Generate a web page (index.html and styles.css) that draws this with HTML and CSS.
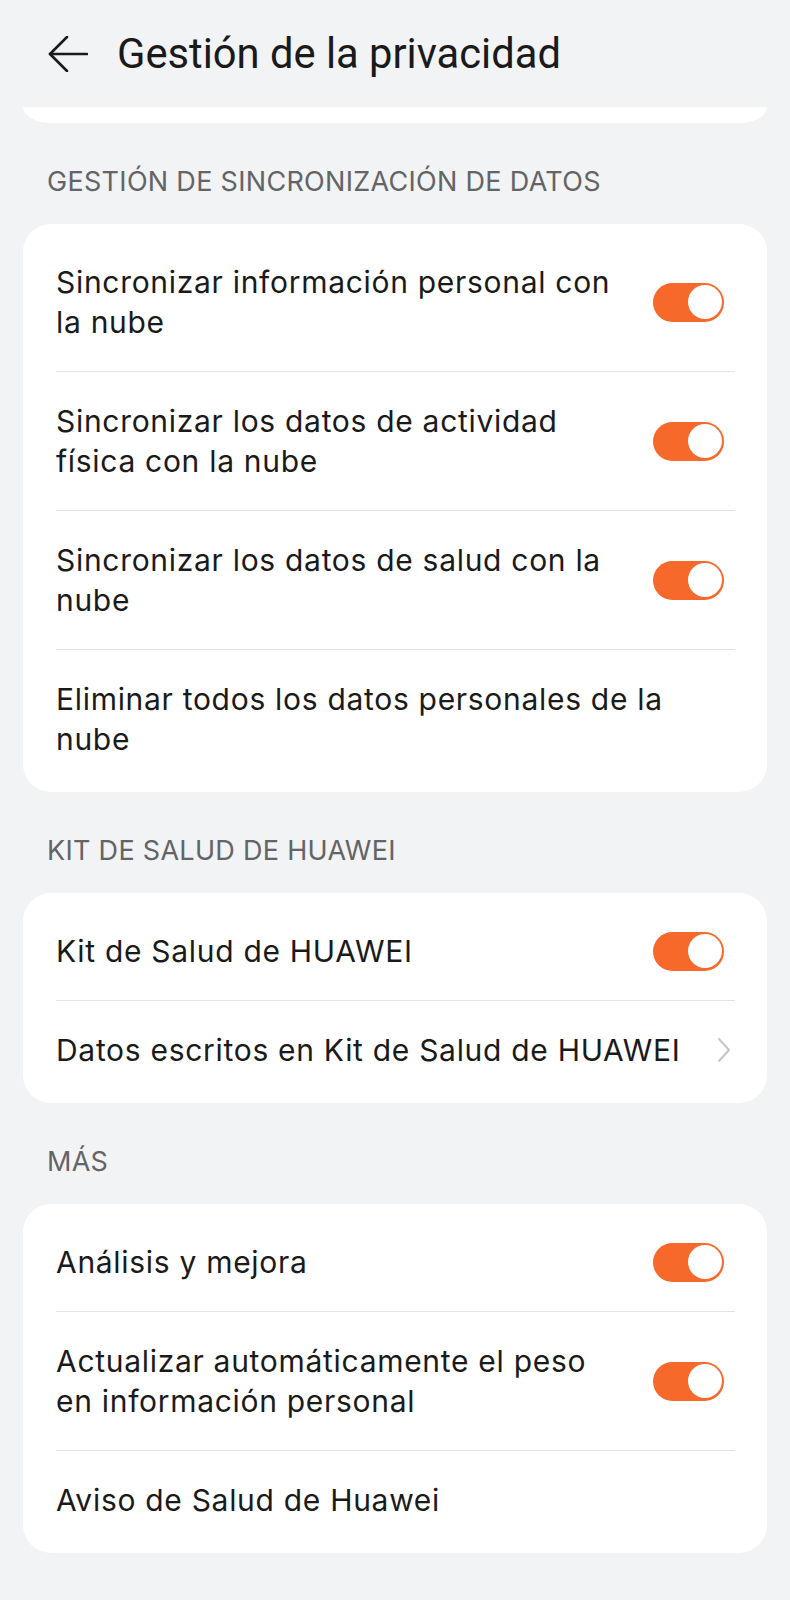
FILE: index.html
```html
<!DOCTYPE html>
<html lang="es">
<head>
    <meta charset="UTF-8">
    <meta name="viewport" content="width=device-width, initial-scale=1.0">
    <title>Gestión de la privacidad</title>
    <link rel="stylesheet" href="styles.css">
</head>
<body>

<header class="topbar">
    <button class="back-btn" aria-label="Atrás">
        <svg width="40" height="36" viewBox="0 0 40 36" fill="none" stroke="#1a1a1a" stroke-width="2.6" stroke-linecap="round" stroke-linejoin="round">
            <path d="M39 18H2"/>
            <path d="M19 1L2 18l17 17"/>
        </svg>
    </button>
    <h1>Gestión de la privacidad</h1>
</header>

<div class="card card-tail"></div>

<section class="group">
    <h2 class="group-title">GESTIÓN DE SINCRONIZACIÓN DE DATOS</h2>
    <div class="card">
        <div class="row">
            <span class="label">Sincronizar información personal con la nube</span>
            <span class="switch on"><span class="knob"></span></span>
        </div>
        <div class="row">
            <span class="label">Sincronizar los datos de actividad física con la nube</span>
            <span class="switch on"><span class="knob"></span></span>
        </div>
        <div class="row">
            <span class="label">Sincronizar los datos de salud con la nube</span>
            <span class="switch on"><span class="knob"></span></span>
        </div>
        <div class="row">
            <span class="label wide">Eliminar todos los datos personales de la nube</span>
        </div>
    </div>
</section>

<section class="group">
    <h2 class="group-title">KIT DE SALUD DE HUAWEI</h2>
    <div class="card">
        <div class="row">
            <span class="label">Kit de Salud de HUAWEI</span>
            <span class="switch on"><span class="knob"></span></span>
        </div>
        <div class="row">
            <span class="label wide">Datos escritos en Kit de Salud de HUAWEI</span>
            <svg class="chevron" width="14" height="26" viewBox="0 0 14 26" fill="none" stroke="#c6c6c6" stroke-width="2" stroke-linecap="round" stroke-linejoin="round">
                <path d="M2 2l10 11L2 24"/>
            </svg>
        </div>
    </div>
</section>

<section class="group">
    <h2 class="group-title">MÁS</h2>
    <div class="card">
        <div class="row">
            <span class="label">Análisis y mejora</span>
            <span class="switch on"><span class="knob"></span></span>
        </div>
        <div class="row">
            <span class="label">Actualizar automáticamente el peso en información personal</span>
            <span class="switch on"><span class="knob"></span></span>
        </div>
        <div class="row">
            <span class="label wide">Aviso de Salud de Huawei</span>
        </div>
    </div>
</section>

</body>
</html>
```

FILE: styles.css
```css
:root {
    --page-bg: #f1f3f5;
    --card-bg: #ffffff;
    --text-color: #1a1a1a;
    --muted-color: #636466;
    --divider: #e3e3e3;
    --accent: #f7692a;
}

* {
    box-sizing: border-box;
}

body {
    margin: 0;
    font-family: Inter, Roboto, 'Noto Sans', sans-serif;
    background-color: var(--page-bg);
    color: var(--text-color);
    padding-bottom: 45px;
}

.topbar {
    height: 107px;
    display: flex;
    align-items: center;
    padding-left: 48px;
}

.back-btn {
    background: none;
    border: none;
    padding: 0;
    width: 40px;
    height: 36px;
    margin-right: 29px;
    display: flex;
    cursor: pointer;
}

.topbar h1 {
    margin: 0;
    font-family: Roboto, sans-serif;
    font-size: 41.7px;
    font-weight: 400;
    color: var(--text-color);
}

.card {
    background-color: var(--card-bg);
    margin: 0 23px;
    border-radius: 28px;
    padding: 9px 0 4px;
}

.card-tail {
    height: 16px;
    padding: 0;
    border-radius: 0 0 28px 28px / 0 0 16px 16px;
}

.group-title {
    margin: 0;
    padding: 43px 0 26px 47px;
    font-size: 27px;
    line-height: 32px;
    font-weight: 400;
    letter-spacing: 0.3px;
    color: var(--muted-color);
}

.row {
    display: flex;
    align-items: center;
    padding: 29px 32px 29px 33px;
    min-height: 98px;
    font-size: 30px;
    line-height: 40px;
    letter-spacing: 0.7px;
}

.row + .row {
    border-top: 1px solid var(--divider);
    margin-left: 33px;
    margin-right: 32px;
    padding-left: 0;
    padding-right: 0;
}

.label {
    flex: 1;
    max-width: 565px;
}

.label.wide {
    max-width: none;
}

.switch {
    width: 71px;
    height: 39px;
    border-radius: 20px;
    background-color: #d5d5d5;
    margin-left: auto;
    margin-right: 11px;
    padding: 2.5px;
    display: flex;
    flex-shrink: 0;
}

.switch.on {
    background-color: var(--accent);
    justify-content: flex-end;
}

.knob {
    width: 34px;
    height: 34px;
    border-radius: 50%;
    background-color: #ffffff;
}

.chevron {
    flex-shrink: 0;
    margin-left: 16px;
    margin-right: 4px;
}
```
